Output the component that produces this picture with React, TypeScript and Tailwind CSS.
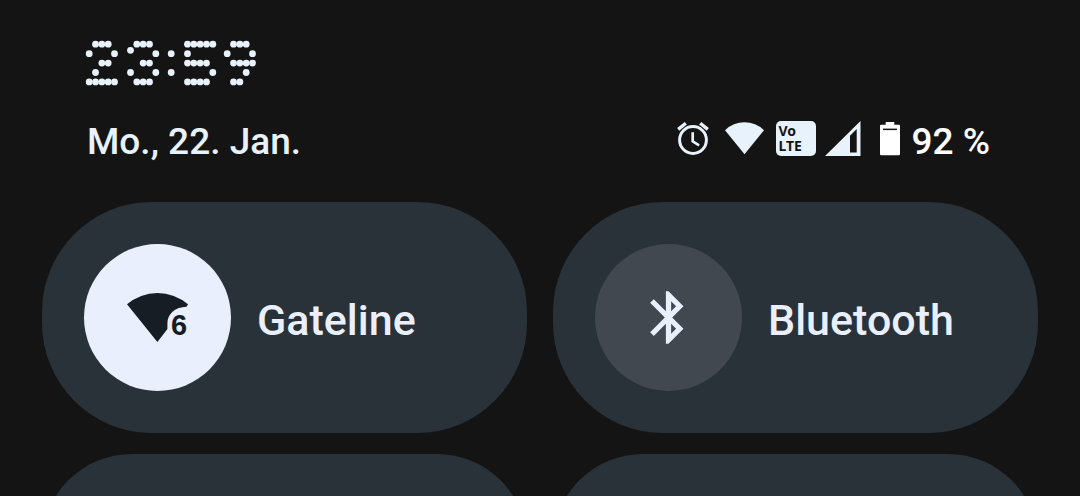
import React from "react";

type Dot = [number, number];

// Dot positions on a 5 x 5 grid, one list for each character of the clock.
const GLYPHS: Record<string, Dot[]> = {
  "2": [[1, 0], [2, 0], [3, 0], [0, 1], [4, 1], [2, 2], [3, 2], [1, 3], [0, 4], [1, 4], [2, 4], [3, 4], [4, 4]],
  "3": [[1, 0], [2, 0], [3, 0], [0, 0.65], [4, 1], [2, 2], [3, 2], [0, 3], [4, 3], [1, 4], [2, 4], [3, 4]],
  ":": [[0, 1], [0, 3]],
  "5": [[0, 0], [1, 0], [2, 0], [3, 0], [4, 0], [0, 1], [0, 2], [1, 2], [2, 2], [3, 2], [4, 3], [0, 4], [1, 4], [2, 4], [3, 4]],
  "9": [[1, 0], [2, 0], [3, 0], [0, 1], [4, 1], [1, 2], [2, 2], [3, 2], [4, 2], [3, 3], [1, 4], [2, 4]],
};

const PITCH_X = 6.33;
const PITCH_Y = 9.43;

function DotClock({ value }: { value: string }) {
  let x = 5.2;
  const dots: React.ReactNode[] = [];
  value.split("").forEach((char, i) => {
    const start = x;
    GLYPHS[char].forEach(([cx, cy], j) => {
      dots.push(<circle key={`${i}-${j}`} cx={start + cx * PITCH_X} cy={4.2 + cy * PITCH_Y} r="3.4" />);
    });
    x += char === ":" ? 16.3 : value[i + 1] === ":" ? 40.7 : char === "5" ? 39.7 : 41.3;
  });
  return (
    <time dateTime={value} className="block">
      <svg role="img" aria-label={value} width="176" height="46" viewBox="0 0 176 46" fill="currentColor">
        {dots}
      </svg>
    </time>
  );
}

function AlarmIcon() {
  return (
    <svg aria-hidden="true" width="34" height="35" viewBox="0 0 34 35" fill="none" stroke="currentColor">
      <circle cx="17" cy="19" r="13.4" strokeWidth="3" />
      <path d="M2.2 8.4L9.8 2.2M24.2 2.2L31.8 8.4" strokeWidth="3.4" />
      <path d="M16.7 11.3V20.3L23.1 24.3" strokeWidth="2.7" />
    </svg>
  );
}

function WifiIcon() {
  return (
    <svg aria-hidden="true" width="39" height="35" viewBox="0 0 39 35" fill="currentColor">
      <path d="M0 9.2A28 28 0 0 1 39 9.2L19.5 33.2Z" />
    </svg>
  );
}

function VolteBadge() {
  return (
    <span className="flex h-[35px] w-10 flex-col justify-center rounded-[5px] bg-[#e8f2fc] pb-px pl-[3px] font-['Noto_Sans',sans-serif] text-[14px] leading-[15px] font-bold text-[#141414]">
      <span>Vo</span>
      <span>LTE</span>
    </span>
  );
}

function SignalIcon() {
  return (
    <svg aria-hidden="true" width="36" height="35" viewBox="0 0 36 35" fill="currentColor">
      <path fillRule="evenodd" d="M0 35L35.5 0V35ZM25 14.8V31.5H31.7V8Z" />
    </svg>
  );
}

function BatteryIcon() {
  return (
    <svg aria-hidden="true" width="20" height="35" viewBox="0 0 20 35">
      <path
        fill="#fff"
        d="M5.7 1H14.3V3.7H18.7A1.2 1.2 0 0 1 20 5V33A1.3 1.3 0 0 1 18.7 34.3H1.3A1.3 1.3 0 0 1 0 33V5A1.3 1.3 0 0 1 1.3 3.7H5.7Z"
      />
      <path fill="#141414" d="M3 7.6H17V9.1H3Z" />
    </svg>
  );
}

function WifiSixIcon() {
  return (
    <svg aria-hidden="true" width="63" height="63" viewBox="0 0 63 63" fill="currentColor">
      <path d="M1 18.3A47 47 0 0 1 62 18.3L60.5 20.8C49.5 21 41.4 28 41.4 37.5V43L31.4 56Z" />
      <text x="45" y="48.5" fontSize="29" fontWeight="700" fontFamily="Liberation Sans, sans-serif">
        6
      </text>
    </svg>
  );
}

function BluetoothIcon() {
  return (
    <svg aria-hidden="true" width="63" height="63" viewBox="0 0 24 24" fill="currentColor">
      <path d="M17.71 7.71L12 2h-1v7.59L6.41 5 5 6.41 10.59 12 5 17.59 6.41 19 11 14.41V22h1l5.71-5.71-4.3-4.29 4.3-4.29zM13 5.83l1.88 1.88L13 9.59V5.83zm1.88 10.46L13 18.17v-3.76l1.88 1.88z" />
    </svg>
  );
}

function Tile({ label, active, icon }: { label: string; active: boolean; icon: React.ReactNode }) {
  return (
    <button
      type="button"
      aria-pressed={active}
      className="flex min-w-0 items-center gap-[26px] rounded-[110px] bg-[#2a3239] p-[42px] text-left text-[#e9effc]"
    >
      <span
        className={
          active
            ? "flex size-[147px] shrink-0 items-center justify-center rounded-full bg-[#e9effc] text-[#161d24]"
            : "flex size-[147px] shrink-0 items-center justify-center rounded-full bg-[#42484f]"
        }
      >
        {icon}
      </span>
      <span className="truncate pt-1 text-[43px] leading-[52px] font-medium">{label}</span>
    </button>
  );
}

export default function App() {
  return (
    <div className="h-screen overflow-hidden bg-[#141414] px-[42px] pt-10 font-[Roboto,sans-serif] text-[#e8f2fc]">
      <header className="pr-[48px] pl-[45px]">
        <div className="-ml-[3px]">
          <DotClock value="23:59" />
        </div>
        <div className="mt-[34px] flex h-11 items-center justify-between text-[37px] leading-[44px] font-medium">
          <span>Mo., 22. Jan.</span>
          <div className="flex items-center">
            <div className="mr-[19px] flex items-center gap-[9px] pb-2">
              <div className="flex items-center gap-3">
                <span className="mr-[3px]"><AlarmIcon /></span>
                <WifiIcon />
                <VolteBadge />
              </div>
              <SignalIcon />
            </div>
            <div className="flex items-center gap-3 text-white">
              <span className="pb-2"><BatteryIcon /></span>
              <span>92 %</span>
            </div>
          </div>
        </div>
      </header>
      <main className="mt-[38px] grid grid-cols-2 gap-x-[26px] gap-y-[21px]">
        <Tile label="Gateline" active icon={<WifiSixIcon />} />
        <Tile label="Bluetooth" active={false} icon={<BluetoothIcon />} />
        <div className="h-[231px] rounded-[90px] bg-[#2a3239]" />
        <div className="h-[231px] rounded-[90px] bg-[#2a3239]" />
      </main>
    </div>
  );
}
